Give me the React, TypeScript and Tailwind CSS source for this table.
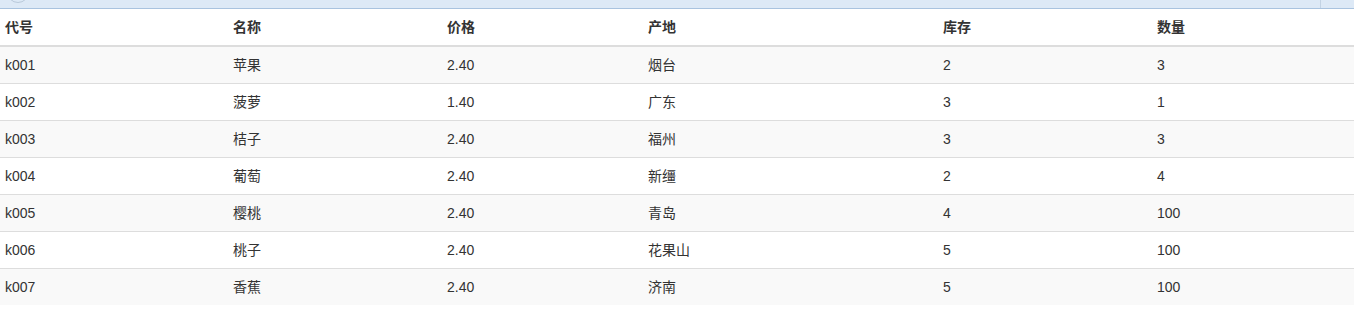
const rows = [
  ['k001', '苹果', '2.40', '烟台', '2', '3'],
  ['k002', '菠萝', '1.40', '广东', '3', '1'],
  ['k003', '桔子', '2.40', '福州', '3', '3'],
  ['k004', '葡萄', '2.40', '新缰', '2', '4'],
  ['k005', '樱桃', '2.40', '青岛', '4', '100'],
  ['k006', '桃子', '2.40', '花果山', '5', '100'],
  ['k007', '香蕉', '2.40', '济南', '5', '100'],
];

const heads = ['代号', '名称', '价格', '产地', '库存', '数量'];
const widths = ['w-[228px]', 'w-[214px]', 'w-[201px]', 'w-[295px]', 'w-[214px]', 'w-[202px]'];

export default function App() {
  return (
    <div className="w-[1354px] h-[310px] bg-white text-[#333] font-['Liberation_Sans','Noto_Sans_CJK_SC',sans-serif] text-[14px] leading-5 overflow-hidden">
      {/* toolbar strip */}
      <div className="h-[9px] bg-[#dde9f6] border-b border-[#a9c3df] flex overflow-hidden">
        <div className="w-[1320px] shrink-0 relative">
          <div className="absolute left-[7px] top-[-19px] w-[22px] h-[22px] rounded-full border border-[#b9c9da]" />
        </div>
        <div className="w-px bg-[#c3d3e4]" />
      </div>

      <table className="w-full table-fixed border-collapse">
        <thead>
          <tr>
            {heads.map((h, i) => (
              <th key={h} className={`${widths[i]} text-left font-bold px-[5px] py-2 border-b-2 border-[#ddd]`}>
                {h}
              </th>
            ))}
          </tr>
        </thead>
        <tbody>
          {rows.map((r, ri) => (
            <tr key={r[0]} className={ri % 2 === 0 ? 'bg-[#f9f9f9]' : 'bg-white'}>
              {r.map((c, ci) => (
                <td key={ci} className="px-[5px] py-2 border-t border-[#ddd]">
                  {c}
                </td>
              ))}
            </tr>
          ))}
        </tbody>
      </table>
    </div>
  );
}
